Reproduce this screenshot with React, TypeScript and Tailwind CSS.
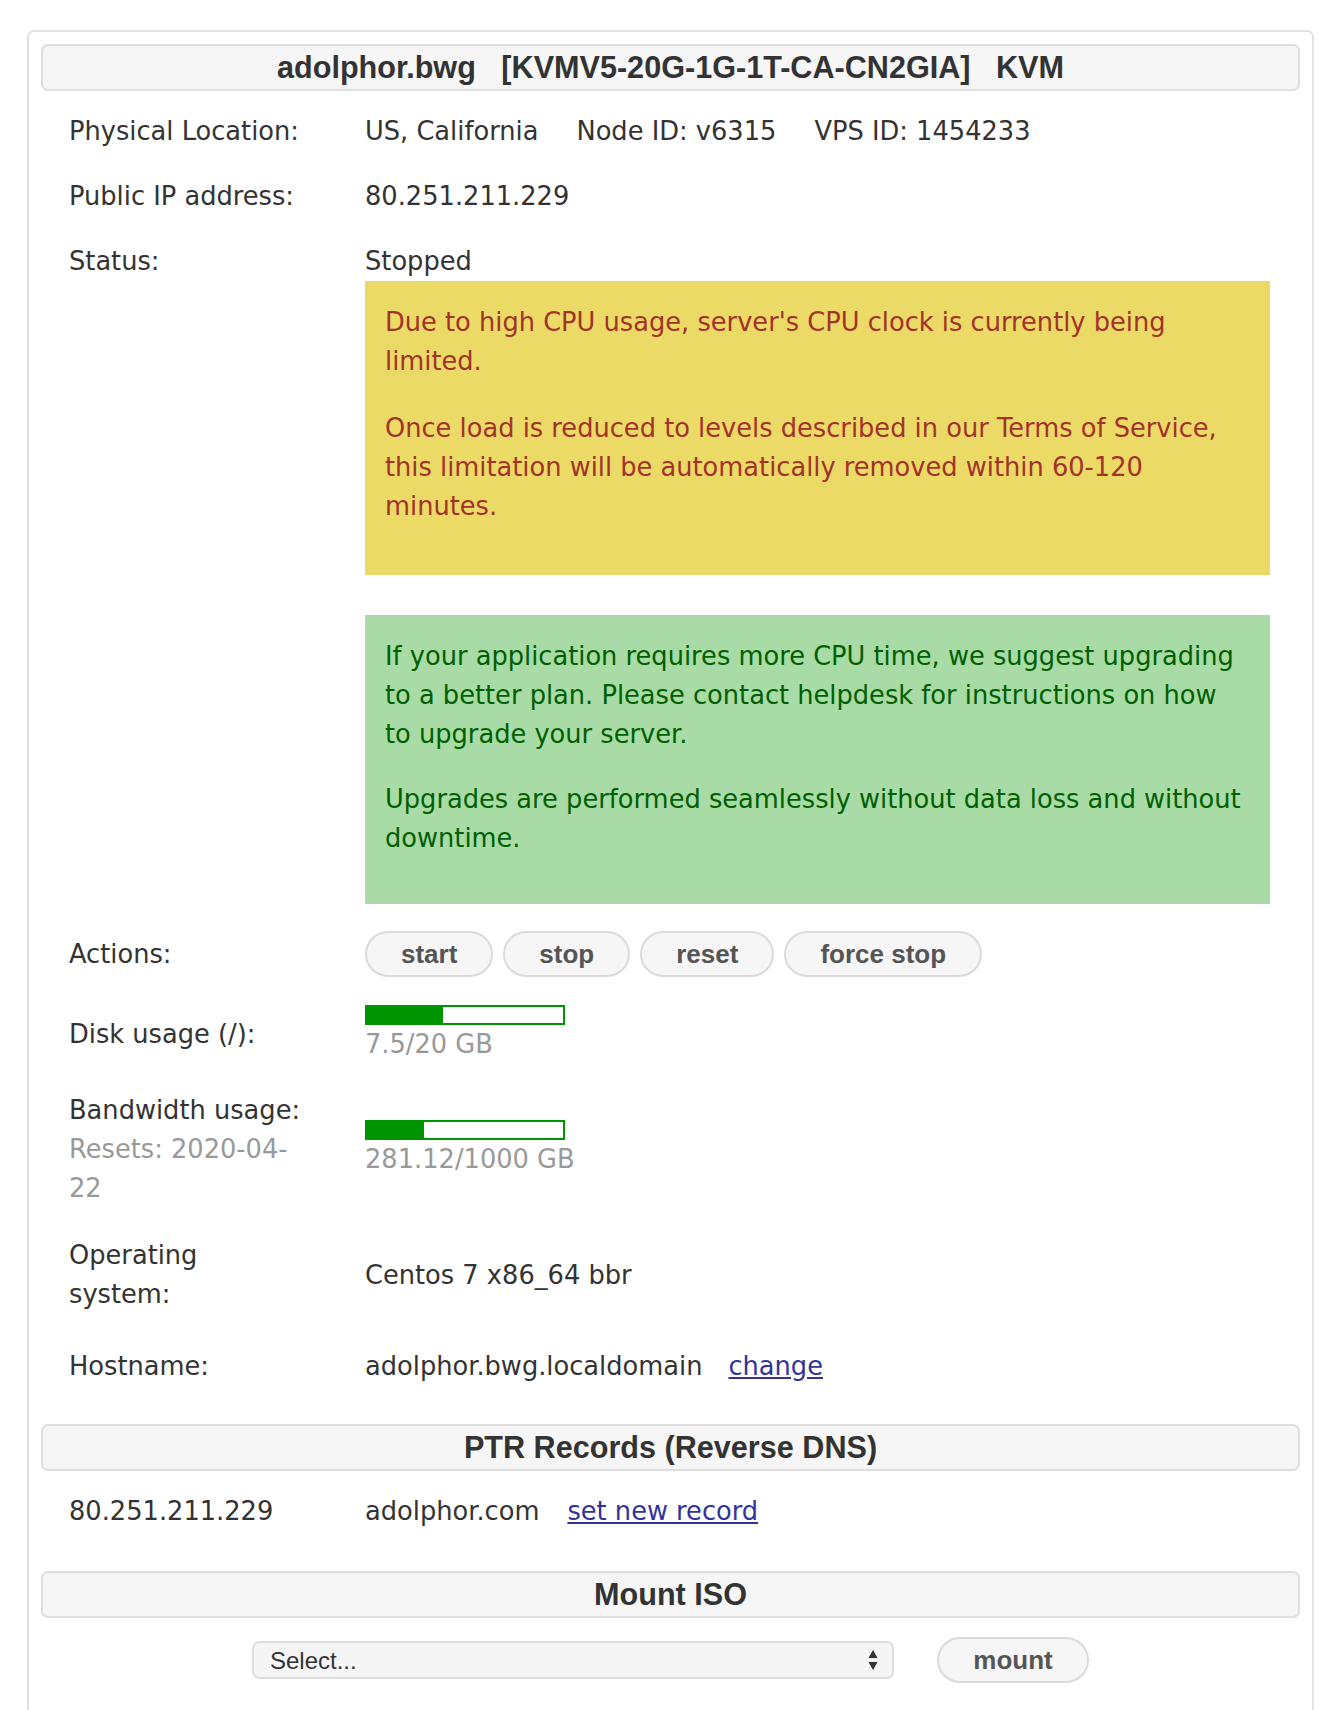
import React from "react";

const body = { fontFamily: '"DejaVu Sans", Verdana, sans-serif' };
const sans = { fontFamily: '"Liberation Sans", Arial, sans-serif' };

function SectionHeader({ title }: { title: string }) {
  return (
    <div
      style={sans}
      className="h-[47px] flex items-center justify-center rounded-[7px] border-2 border-[#dedede] bg-[#f6f6f6] text-[30.6px] font-bold text-[#333] whitespace-pre"
    >
      {title}
    </div>
  );
}

function Row({
  label,
  children,
  top,
  className = "",
}: {
  label: React.ReactNode;
  children: React.ReactNode;
  top?: boolean;
  className?: string;
}) {
  return (
    <div
      className={`flex py-[13px] ${top ? "items-start" : "items-center"} ${className}`}
    >
      <div className="w-[296px] shrink-0">{label}</div>
      <div className="flex-1">{children}</div>
    </div>
  );
}

function UsageBar({ pct, text }: { pct: number; text: string }) {
  return (
    <div>
      <div className="w-[200px] h-[20px] border-2 border-[#009400] bg-white">
        <div className="h-full bg-[#009400]" style={{ width: `${pct}%` }} />
      </div>
      <div className="text-[#999]">{text}</div>
    </div>
  );
}

function Btn({ children }: { children: React.ReactNode }) {
  return (
    <button
      style={sans}
      className="h-[46px] px-[34px] rounded-full border-2 border-[#dadada] bg-[#f6f6f6] text-[26px] font-bold text-[#555]"
    >
      {children}
    </button>
  );
}

export default function App() {
  return (
    <div className="bg-white min-h-[1760px] pt-[30px]">
      <div
        style={body}
        className="ml-[27px] w-[1287px] border-2 border-[#e2e2e2] rounded-[7px] px-[12px] pt-[12px] pb-[120px] text-[25.7px] leading-[39px] text-[#333]"
      >
        <SectionHeader title="adolphor.bwg   [KVMV5-20G-1G-1T-CA-CN2GIA]   KVM" />

        <div className="px-[28px] pt-[8px] mb-[25px]">
          <Row label="Physical Location:">
            US, California
            <span className="ml-[38px]">Node ID: v6315</span>
            <span className="ml-[38px]">VPS ID: 1454233</span>
          </Row>
          <Row label="Public IP address:">80.251.211.229</Row>
          <Row label="Status:" top>
            <div>Stopped</div>
            <div className="w-[905px] bg-[#ecda66] text-[#a3322a] px-[20px] pt-[22px] pb-[49px] whitespace-nowrap">
              <p>
                Due to high CPU usage, server's CPU clock is currently being
                <br />
                limited.
              </p>
              <p className="mt-[28px]">
                Once load is reduced to levels described in our Terms of Service,
                <br />
                this limitation will be automatically removed within 60-120
                <br />
                minutes.
              </p>
            </div>
            <div className="mt-[40px] w-[905px] bg-[#a8dba6] text-[#005f00] px-[20px] pt-[22px] pb-[46px] whitespace-nowrap">
              <p>
                If your application requires more CPU time, we suggest upgrading
                <br />
                to a better plan. Please contact helpdesk for instructions on how
                <br />
                to upgrade your server.
              </p>
              <p className="mt-[26px]">
                Upgrades are performed seamlessly without data loss and without
                <br />
                downtime.
              </p>
            </div>
          </Row>
          <Row label="Actions:" className="mt-[1px]">
            <div className="flex gap-[10px]">
              <Btn>start</Btn>
              <Btn>stop</Btn>
              <Btn>reset</Btn>
              <Btn>force stop</Btn>
            </div>
          </Row>
          <Row label="Disk usage (/):" className="mt-[2px]">
            <UsageBar pct={39} text="7.5/20 GB" />
          </Row>
          <Row
            className="mt-[1px]"
            label={
              <>
                <div>Bandwidth usage:</div>
                <div className="text-[#999]">
                  Resets: 2020-04-
                  <br />
                  22
                </div>
              </>
            }
          >
            <UsageBar pct={29} text="281.12/1000 GB" />
          </Row>
          <Row
            className="mt-[2px]"
            label={
              <>
                Operating
                <br />
                system:
              </>
            }
          >
            Centos 7 x86_64 bbr
          </Row>
          <Row label="Hostname:" className="mt-[7px]">
            adolphor.bwg.localdomain
            <a href="#" className="ml-[26px] underline text-[#33339a]">
              change
            </a>
          </Row>
        </div>

        <SectionHeader title="PTR Records (Reverse DNS)" />
        <div className="px-[28px] pt-[8px] mb-[27px]">
          <Row label="80.251.211.229">
            adolphor.com
            <a href="#" className="ml-[28px] underline text-[#33339a]">
              set new record
            </a>
          </Row>
        </div>

        <SectionHeader title="Mount ISO" />
        <div className="flex items-center justify-center gap-[43px] pt-[19px]">
          <div
            style={sans}
            className="w-[642px] h-[38px] flex items-center justify-between rounded-[7px] border-2 border-[#dedede] bg-[#f5f5f5] pl-[16px] pr-[14px] text-[24px] text-[#333]"
          >
            <span>Select...</span>
            <svg width="10" height="22" viewBox="0 0 10 22">
              <path d="M5 1 L9.5 9 H0.5 Z" fill="#333" />
              <path d="M5 21 L9.5 13 H0.5 Z" fill="#333" />
            </svg>
          </div>
          <button
            style={sans}
            className="w-[152px] h-[46px] rounded-full border-2 border-[#dadada] bg-[#f6f6f6] text-[26px] font-bold text-[#555]"
          >
            mount
          </button>
        </div>
      </div>
    </div>
  );
}
